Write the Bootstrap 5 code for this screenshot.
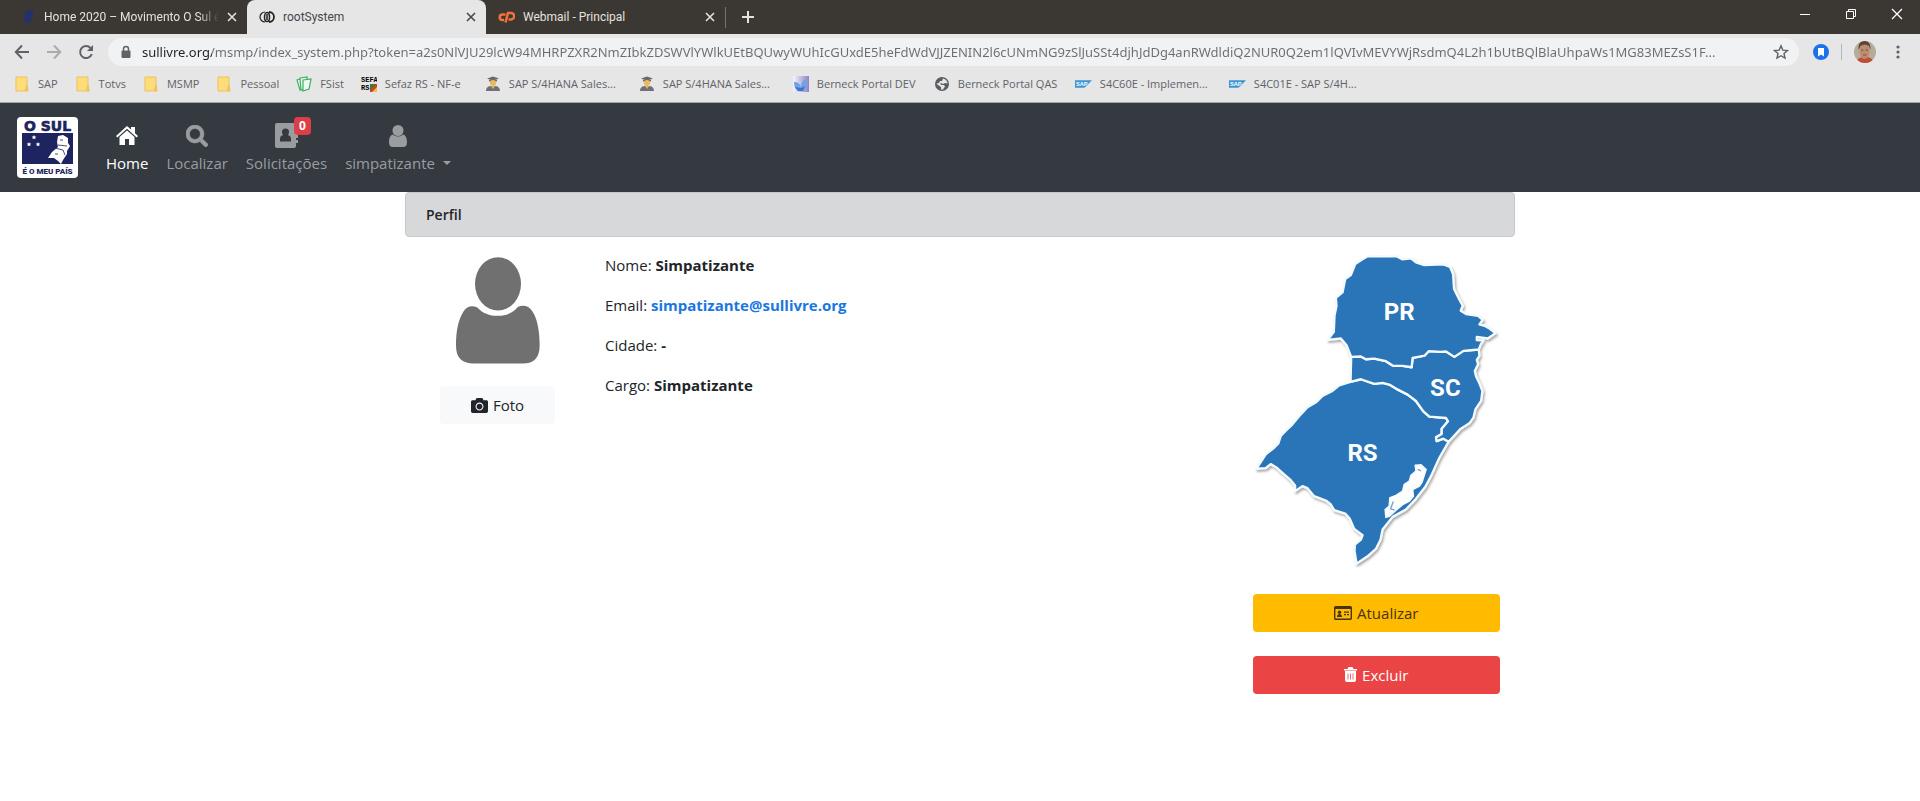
<!DOCTYPE html>
<html lang="pt-BR">
<head>
<meta charset="utf-8">
<meta name="viewport" content="width=device-width, initial-scale=1">
<title>rootSystem</title>
<link href="https://cdn.jsdelivr.net/npm/bootstrap@5.3.0/dist/css/bootstrap.min.css" rel="stylesheet">
<style>
  body { font-family: "Open Sans", "Noto Sans", sans-serif; font-size: 15px; line-height: 24px; color: #212529; background: #fff; }
  svg { display: block; flex: none; }
  .bare { border: 0; background: none; padding: 0; color: inherit; display: flex; }

  /* browser window */
  .tabstrip { background: #3b3833; height: 34px; padding-left: 8px; font-family: Roboto, sans-serif; font-size: 12px; line-height: 16px; color: #e4e2df; }
  .win-tab { width: 239px; padding: 0 10px 0 12px; gap: 8px; }
  .win-tab a { color: inherit; text-decoration: none; overflow: hidden; white-space: nowrap; flex: 1; }
  .win-tab.current { background: #e6e6e6; color: #45474a; border-radius: 8px 8px 0 0; }
  .fading { -webkit-mask-image: linear-gradient(to right, #000 88%, transparent); mask-image: linear-gradient(to right, #000 88%, transparent); }
  .tab-line { width: 1px; height: 21px; background: #77746f; }
  .win-controls { gap: 32px; padding: 0 17px 6px 0; color: #fff; }
  .toolbar { background: #e6e6e6; height: 36px; padding: 0 20px 0 14px; color: #5f6368; }
  .toolbar-end { gap: 12px; margin-left: 14px; }
  .toolbar-end .tab-line { height: 16px; background: #b4b6b9; }
  .address { background: #f1f2f4; border-radius: 14px; height: 28px; padding: 0 10px 0 12px; gap: 10px; margin-left: 14px; }
  .address input { border: 0; outline: 0; padding: 0; font-family: "Noto Sans", sans-serif; font-size: 13px; height: 24px; min-width: 0; color: #6a6d72;
    background: linear-gradient(to right, #202124 70px, #6a6d72 70px); -webkit-background-clip: text; background-clip: text; -webkit-text-fill-color: transparent; text-overflow: ellipsis; }
  .bookmarks { background: #e6e6e6; height: 33px; padding: 0 14px 4px; gap: 17px; border-bottom: 1px solid #a2a4a6; font-size: 11px; line-height: 16px; }
  .bookmarks a { color: #5f6368; text-decoration: none; display: flex; align-items: center; gap: 8px; white-space: nowrap; }
  .bookmarks .mid-mark { min-width: 107px; }
  .bookmarks .long-mark { min-width: 124px; }
  .bookmarks .full-mark { min-width: 137px; }

  /* site */
  .site-nav { background: #343a40; padding: 14px 17px; }
  .site-nav .nav-link { display: flex; flex-direction: column; align-items: center; padding: 0 8px; color: #9a9da0; }
  .site-nav .nav-link.active { color: #fff; }
  .site-nav .pic { height: 30px; display: flex; align-items: center; position: relative; }
  .site-nav .counter { position: absolute; left: 19px; top: -4px; background: #dc3f48; font-size: 12px; line-height: 12px; padding: 3px 5px; font-family: "Noto Sans", sans-serif; }
  .site-nav .navbar-nav { margin-left: 20px; gap: 2px; }
  .dropdown-toggle::after { margin-left: 8px; }
  .page-box { max-width: 1110px; }
  .page-box .row { --bs-gutter-x: 30px; margin: 16px 0 0; }
  .section-title { background: #d6d8d9; border: 1px solid #c6c8ca; border-radius: 4px; padding: 10px 20px 9px; font-weight: 600; line-height: 24px; font-size: 14px; }
  .page-box p { margin-bottom: 16px; }
  .page-box .btn { font-size: 15px; line-height: 24px; border-radius: 4px; display: flex; align-items: center; justify-content: center; gap: 5px; }
  .photo-box { gap: 22px; }
  .map-box { margin-bottom: -2px; }
  .btn-photo { width: 115px; background: #f8f9fa; color: #212529; }
  .btn-update { background: #ffbb00; color: #4a3310; }
  .btn-remove { background: #ea4444; color: #fff; }
  .mail { color: #1a76e0; text-decoration: none; }
</style>
</head>
<body>
<svg width="0" height="0" class="d-none">
  <symbol id="folder" viewBox="0 0 16 16"><path d="M2 1h11v10l1 4H2z" fill="#fddc7c" stroke="#ecc35a"/><path d="M11 14l2-5 1 6z" fill="#f5cb62" stroke="#e6b84a" stroke-width=".6"/></symbol>
  <symbol id="grad" viewBox="0 0 16 16"><path d="M2 2.500L8 .5l6 2L8 4.500z" fill="#66696d"/><path d="M4 3.500h8v2H4z" fill="#7d6a50"/><circle cx="8" cy="7" r="3" fill="#e8ba62"/><path d="M1 15c0-4 3-5 5-5l2 2 2-2c2 0 5 1 5 5z" fill="#6e7277"/><path d="M6 10h4l-2 3z" fill="#e0a955"/></symbol>
  <symbol id="sap" viewBox="0 0 18 10"><path d="M0 1h18l-8 8H0z" fill="#3b95d3"/><text x="1" y="7" font-family="Liberation Sans" font-weight="bold" font-size="6" fill="#fff">SAP</text></symbol>
  <symbol id="cross" viewBox="0 0 10 10"><path d="M1 1l8 8M9 1L1 9" stroke="currentColor" stroke-width="1.600"/></symbol>
  <symbol id="person" viewBox="195 234 252 320"><ellipse cx="321" cy="314" rx="69" ry="80"/><path d="M258 384C240 378 228 382 218 396 202 420 195 455 195 500 195 535 212 553 248 553H395C430 553 446 535 446 498 446 455 438 415 424 396 412 380 400 376 381 383 365 402 345 410 320 410 295 410 275 402 258 384Z"/></symbol>
</svg>

<header>
  <div class="tabstrip d-flex align-items-stretch">
    <div class="win-tab d-flex align-items-center">
      <svg width="16" height="16" viewBox="0 0 16 16"><path d="M6 2l4-1 3 2 0 4-1 3-3 4-3 1-1-3-3-1 3-3-1-2z" fill="#26306b"/></svg>
      <a href="#" class="fading">Home 2020 – Movimento O Sul é</a>
      <button class="bare" aria-label="Fechar"><svg width="10" height="10"><use href="#cross"/></svg></button>
    </div>
    <div class="win-tab current d-flex align-items-center">
      <svg width="16" height="16" viewBox="0 0 16 16" fill="none" stroke="#222"><path d="M6 3a4.800 4.800 0 100 10" stroke-width="1.200"/><path d="M10 3a4.800 4.800 0 110 10" stroke-width="1.800"/><ellipse cx="8" cy="8" rx="2.500" ry="4.600" stroke-width="1.500"/><path d="M8 5v6" stroke-width="1.500"/></svg>
      <a href="#">rootSystem</a>
      <button class="bare" aria-label="Fechar"><svg width="10" height="10"><use href="#cross"/></svg></button>
    </div>
    <div class="win-tab d-flex align-items-center">
      <svg width="17" height="16" viewBox="0 0 17 16" fill="none" stroke="#f2713c" stroke-width="2.500"><path d="M7.500 5.500H4.500a2.800 2.800 0 000 5.600H6M7.500 13.500L10 4h3a2.600 2.600 0 010 6.400h-2.500"/></svg>
      <a href="#">Webmail - Principal</a>
      <button class="bare" aria-label="Fechar"><svg width="10" height="10"><use href="#cross"/></svg></button>
    </div>
    <div class="d-flex align-items-center gap-3">
      <span class="tab-line"></span>
      <button class="bare" aria-label="Nova guia"><svg width="12" height="12" viewBox="0 0 12 12"><path d="M6 0v12M0 6h12" stroke="currentColor" stroke-width="2"/></svg></button>
    </div>
    <div class="win-controls d-flex align-items-center ms-auto">
      <button class="bare" aria-label="Minimizar"><svg width="14" height="12" viewBox="0 0 14 12"><path d="M1 6.500h10" stroke="currentColor"/></svg></button>
      <button class="bare" aria-label="Restaurar"><svg width="14" height="12" viewBox="0 0 14 12"><path d="M1.500 3.500h7v7h-7zM3.500 3V1.500h7v7H9" fill="none" stroke="currentColor"/></svg></button>
      <button class="bare" aria-label="Fechar janela"><svg width="12" height="12" viewBox="0 0 12 12"><path d="M1 1l10 10M11 1L1 11" stroke="currentColor" stroke-width="1.300"/></svg></button>
    </div>
  </div>

  <div class="toolbar d-flex align-items-center">
    <div class="d-flex gap-3">
      <button class="bare" aria-label="Voltar"><svg width="16" height="16" viewBox="0 0 16 16"><path d="M15 8H2M8 1.500L1.800 8 8 14.500" fill="none" stroke="currentColor" stroke-width="2"/></svg></button>
      <button class="bare" aria-label="Avançar"><svg width="16" height="16" viewBox="0 0 16 16"><path d="M1 8h13M8 1.500L14.200 8 8 14.500" fill="none" stroke="#a9abae" stroke-width="2"/></svg></button>
      <button class="bare" aria-label="Recarregar"><svg width="16" height="16" viewBox="0 0 16 16"><path d="M13.800 10A6 6 0 1112.500 4" fill="none" stroke="currentColor" stroke-width="2"/><path d="M15 1v6H9z" fill="currentColor"/></svg></button>
    </div>
    <div class="address d-flex align-items-center flex-grow-1">
      <svg width="12" height="14" viewBox="0 0 12 14"><path d="M3.500 6V4a2.500 2.500 0 015 0v2" fill="none" stroke="#5f6368" stroke-width="1.500"/><rect x="1.500" y="5.500" width="9" height="7.500" rx="1" fill="#5f6368"/></svg>
      <input type="text" class="flex-grow-1" aria-label="Endereço" value="sullivre.org/msmp/index_system.php?token=a2s0NlVJU29lcW94MHRPZXR2NmZIbkZDSWVlYWlkUEtBQUwyWUhIcGUxdE5heFdWdVJJZENIN2l6cUNmNG9zSlJuSSt4djhJdDg4anRWdldiQ2NUR0Q2em1lQVIvMEVYWjRsdmQ4L2h1bUtBQlBlaUhpaWs1MG83MEZsS1F...">
      <button class="bare" aria-label="Favoritar"><svg width="16" height="16" viewBox="0 0 16 16"><path d="M8 1.800l1.800 4.300 4.700.4-3.500 3 1 4.600L8 11.700 4 14.100l1-4.600-3.500-3 4.700-.4z" fill="none" stroke="#5f6368" stroke-width="1.400"/></svg></button>
    </div>
    <div class="toolbar-end d-flex align-items-center">
      <svg width="16" height="16" viewBox="0 0 16 16"><circle cx="8" cy="8" r="8" fill="#1a73e8"/><path d="M5 4h6v8.500l-3-2-3 2z" fill="#fff"/></svg>
      <span class="tab-line"></span>
      <svg class="me-2" width="22" height="22" viewBox="0 0 22 22"><defs><clipPath id="face"><circle cx="11" cy="11" r="11"/></clipPath></defs><g clip-path="url(#face)"><path fill="#b5ad9a" d="M0 0h22v22H0z"/><path fill="#bf4d33" d="M2 22c1-5 5-6 9-6s8 1 9 6z"/><ellipse cx="10.500" cy="10" rx="5" ry="8" fill="#c08a6e"/><path fill="#5b4636" d="M4.500 9C4 2 7 0 10 0s7 1 6.500 9l-1.500-4c-3-2-6-2-8.500 0z"/><path d="M7 9h2.500m2 0H14M9 14h3.500" stroke="#7a5444"/></g></svg>
      <button class="bare" aria-label="Menu"><svg width="4" height="16" viewBox="0 0 4 16"><g fill="#5f6368"><circle cx="2" cy="3" r="1.600"/><circle cx="2" cy="8" r="1.600"/><circle cx="2" cy="13" r="1.600"/></g></svg></button>
    </div>
  </div>

  <nav class="bookmarks d-flex align-items-center" aria-label="Favoritos">
    <a href="#"><svg width="16" height="16"><use href="#folder"/></svg>SAP</a>
    <a href="#"><svg width="16" height="16"><use href="#folder"/></svg>Totvs</a>
    <a href="#"><svg width="16" height="16"><use href="#folder"/></svg>MSMP</a>
    <a href="#"><svg width="16" height="16"><use href="#folder"/></svg>Pessoal</a>
    <a href="#"><svg width="16" height="16" viewBox="0 0 16 16" fill="#eefaf0" stroke="#3dae63" stroke-width="1.200"><path d="M1 4l6-2 2 10-5 2z"/><path d="M4 2l7-1 0 12-6 1z"/><path d="M7 4l8-1-2 10-6 2z"/></svg>FSist</a>
    <a href="#" class="mid-mark"><svg width="16" height="16" viewBox="0 0 16 16"><text x="0" y="6" font-family="Liberation Mono" font-weight="bold" font-size="7">SEFA</text><text x="0" y="14" font-family="Liberation Mono" font-weight="bold" font-size="7">RS</text><path d="M9 8h7l-7 8z" fill="#3c7d35"/><path d="M16 8v8H9z" fill="#eec33b"/><path d="M9 14l6-6h1v3l-5 5H9z" fill="#c9402f"/></svg>Sefaz RS - NF-e</a>
    <a href="#" class="full-mark"><svg width="16" height="16"><use href="#grad"/></svg>SAP S/4HANA Sales...</a>
    <a href="#" class="full-mark"><svg width="16" height="16"><use href="#grad"/></svg>SAP S/4HANA Sales...</a>
    <a href="#" class="long-mark"><svg width="16" height="16" viewBox="0 0 16 16"><defs><linearGradient id="sky" x1="0" y1="0" x2="1" y2="0"><stop offset="0" stop-color="#f3f6fd"/><stop offset="1" stop-color="#8c84c6"/></linearGradient></defs><path fill="url(#sky)" d="M0 0h16v16H0z"/><path fill="#6fa3e4" d="M1 6c4 0 6 2 7 5 0-4 2-7 4-8 3 5 2 9-2 12H5C2 13 1 10 1 6z"/><path fill="#3f74cf" d="M2 11l6 1 4-2-2 5H5z"/></svg>Berneck Portal DEV</a>
    <a href="#" class="long-mark"><svg width="16" height="16" viewBox="0 0 16 16"><circle cx="8" cy="8" r="7" fill="#5a5d61"/><path fill="#e6e6e6" d="M9 2.500c3 .5 4.500 3 4.500 5L11 7 9 8 7 7l-1 1 2 1h2l1 1.500-2 3-2 0V11L4 9 2.500 7.500 5 7l1-2h2z"/></svg>Berneck Portal QAS</a>
    <a href="#" class="full-mark"><svg width="17" height="10"><use href="#sap"/></svg>S4C60E - Implemen...</a>
    <a href="#" class="full-mark"><svg width="17" height="10"><use href="#sap"/></svg>S4C01E - SAP S/4H...</a>
  </nav>
</header>

<nav class="navbar navbar-expand site-nav" aria-label="Principal">
  <a href="#" aria-label="O Sul é o meu país">
    <svg width="61" height="61" viewBox="0 0 61 61">
      <rect width="61" height="61" rx="4" fill="#fff"/>
      <text x="30.500" y="14" text-anchor="middle" font-family="DejaVu Sans" font-weight="bold" font-size="14" fill="#1d2460" stroke="#1d2460" stroke-width=".6">O SUL</text>
      <path fill="#1d2460" d="M5 16h51v31H5z"/>
      <path fill="#fff" d="M41 19l5-1 5 3 0 5 2 3-3 5 0 3-4 6-2 4-3-3-4-3-6 0 4-6 6-5-1-5z"/>
      <path stroke="#1d2460" stroke-width=".8" fill="none" d="M41 28l9 1M38 31l8 2 2 5M43 23h3M38 37h3"/>
      <path fill="#fff" d="M17 18l.7 1.500 1.600.1-1.200 1.100.4 1.600-1.500-.9-1.500.9.400-1.600-1.200-1.100 1.600-.1zM12 25l.7 1.500 1.600.1-1.200 1.100.4 1.600-1.500-.9-1.500.9.400-1.600-1.200-1.100 1.600-.1zM21 25l.7 1.500 1.600.1-1.200 1.100.4 1.600-1.500-.9-1.500.9.400-1.600-1.200-1.100 1.600-.1z"/>
      <text x="30.500" y="57" text-anchor="middle" font-family="Roboto" font-weight="900" font-size="8" fill="#1d2460">É O MEU PAÍS</text>
    </svg>
  </a>
  <ul class="navbar-nav">
    <li class="nav-item"><a class="nav-link active" aria-current="page" href="#">
      <span class="pic"><svg width="22" height="19" viewBox="0 0 22 19" fill="currentColor"><path d="M0 10L11 0l4 3.600V1h4v6.200L22 10l-1.300 1.400L11 2.800 1.300 11.400z"/><path d="M3.500 11L11 4.500 18.500 11v8H13v-6H9v6H3.500z"/></svg></span>Home</a></li>
    <li class="nav-item"><a class="nav-link" href="#">
      <span class="pic"><svg width="22" height="22" viewBox="0 0 512 512" fill="currentColor" stroke="currentColor" stroke-width="16"><path d="M505 442.700L405.300 343c-4.500-4.500-10.600-7-17-7H372c27.600-35.300 44-79.700 44-128C416 93.100 322.900 0 208 0S0 93.100 0 208s93.100 208 208 208c48.300 0 92.700-16.400 128-44v16.300c0 6.400 2.500 12.500 7 17l99.700 99.700c9.400 9.400 24.600 9.400 33.900 0l28.300-28.300c9.400-9.400 9.400-24.600.1-34zM208 336c-70.700 0-128-57.200-128-128 0-70.700 57.200-128 128-128 70.700 0 128 57.200 128 128 0 70.700-57.200 128-128 128z"/></svg></span>Localizar</a></li>
    <li class="nav-item"><a class="nav-link" href="#">
      <span class="pic"><svg width="23" height="25" viewBox="0 0 23 25"><rect width="21" height="25" rx="2" fill="currentColor"/><path d="M21 5h2v4h-2zM21 11h2v4h-2zM21 17h2v3h-2z" fill="currentColor"/><circle cx="10.500" cy="9" r="3.500" fill="#343a40"/><path d="M5 18.500V16c0-3 2-4 3.500-4h4c1.500 0 3.500 1 3.500 4v2.500z" fill="#343a40"/></svg><span class="badge rounded-1 counter">0</span></span>Solicitações</a></li>
    <li class="nav-item dropdown"><a class="nav-link" href="#" role="button" data-bs-toggle="dropdown" aria-expanded="false">
      <span class="pic"><svg width="18" height="22" viewBox="0 0 18 22" fill="currentColor"><circle cx="9" cy="5.500" r="5.500"/><path d="M4 9.500C6 12 12 12 14 9.500c3 .5 4 4 4 8 0 3-1.500 4.500-4 4.500H4c-2.500 0-4-1.500-4-4.500 0-4 1-7.500 4-8z"/></svg></span><span class="dropdown-toggle">simpatizante</span></a></li>
  </ul>
</nav>

<main class="container page-box px-0">
  <h1 class="section-title mb-0">Perfil</h1>
  <div class="row">
    <div class="col-2 photo-box d-flex flex-column align-items-center">
      <svg class="mt-1" width="84" height="107" fill="#707070" role="img" aria-label="Foto do perfil"><use href="#person"/></svg>
      <button class="btn btn-photo" type="button"><svg width="17" height="17" viewBox="0 0 512 512" fill="currentColor"><path d="M512 144v288c0 26.500-21.500 48-48 48H48c-26.500 0-48-21.500-48-48V144c0-26.500 21.500-48 48-48h88l12.300-32.900c7-18.700 24.900-31.100 44.900-31.100h125.500c20 0 37.900 12.400 44.900 31.100L376 96h88c26.500 0 48 21.500 48 48zM376 288c0-66.200-53.800-120-120-120s-120 53.800-120 120 53.800 120 120 120 120-53.800 120-120zm-32 0c0 48.500-39.500 88-88 88s-88-39.500-88-88 39.500-88 88-88 88 39.500 88 88z"/></svg>Foto</button>
    </div>
    <div class="col-7">
      <p>Nome: <strong>Simpatizante</strong></p>
      <p>Email: <strong><a class="mail" href="mailto:simpatizante@sullivre.org">simpatizante@sullivre.org</a></strong></p>
      <p>Cidade: <strong>-</strong></p>
      <p>Cargo: <strong>Simpatizante</strong></p>
    </div>
    <div class="col-3 d-flex flex-column gap-4">
      <svg class="w-100 map-box" viewBox="42 42 741 954" role="img" aria-label="Mapa: PR, SC, RS">
        <defs><filter id="shade" x="-5%" y="-5%" width="110%" height="110%"><feDropShadow dx="4" dy="6" stdDeviation="3" flood-color="#555" flood-opacity=".5"/></filter></defs>
        <g fill="#2c74b8" stroke="#f4fbff" stroke-width="7" stroke-linejoin="round" filter="url(#shade)">
          <path d="M334 428L300 438 278 456 250 470 232 488 205 504 185 525 160 555 138 576 125 590 118 612 105 625 80 645 52 688 80 686 95 674 112 684 130 700 155 722 168 738 168 755 190 740 205 746 225 770 262 784 275 795 285 812 318 822 332 838 345 868 370 887 365 900 347 915 346 935 352 972 385 950 410 928 424 900 430 870 460 832 500 810 530 778 558 742 575 710 600 655 628 607 612 598 592 605 590 594 607 584 607 568 626 546 620 536 570 532 552 516 530 485 505 466 470 448 450 436 430 431 405 434 365 420Z"/>
          <path d="M336 353L365 352 380 360 405 358 440 366 460 379 490 380 517 384 520 356 556 349 568 336 605 338 620 337 645 353 672 335 718 331 720 350 712 362 716 375 706 395 710 412 718 428 729 455 725 485 708 510 702 535 690 552 662 570 628 607 612 598 592 605 590 594 607 584 607 568 626 546 620 536 570 532 552 516 530 485 505 466 470 448 450 436 430 431 405 434 365 420 334 428Z"/>
          <path d="M385 52L470 51 490 61 515 58 530 70 555 78 612 76 632 84 641 105 644 150 658 178 670 200 664 215 680 225 716 230 730 242 720 256 735 260 750 268 768 282 745 298 712 293 712 303 732 304 724 316 718 331 672 335 645 353 620 337 605 338 568 336 556 349 520 356 517 384 490 380 460 379 440 366 405 358 380 360 365 352 336 353 322 318 305 298 266 302 284 278 286 230 292 200 290 176 310 160 318 120 335 108 348 75 365 64Z"/>
        </g>
        <path d="M528 678L545 676 560 690 553 712 548 728 540 740 520 750 522 770 510 785 490 795 470 812 450 830 440 833 438 810 450 800 452 775 470 768 490 755 495 735 510 725 515 708 530 695Z" fill="#fff" stroke="#f4fbff" stroke-width="5"/>
        <path d="M535 690l10 4M462 786l-8 22 12 4" fill="none" stroke="#6fa3d0" stroke-width="4"/>
        <g fill="#fff" font-family="Roboto" font-weight="700" font-size="72" text-anchor="middle">
          <text x="480" y="242">PR</text><text x="618" y="471">SC</text><text x="370" y="664">RS</text>
        </g>
      </svg>
      <button class="btn btn-update" type="button"><svg width="18" height="14" viewBox="0 0 18 14"><rect x=".7" y=".7" width="16.600" height="12.600" rx="1" fill="none" stroke="currentColor" stroke-width="1.400"/><path d="M1 1h16v2H1zM3 11c0-2 1-3 2.500-3S8 9 8 11zM10 5.500h5v1.200h-5zM10 8h2v1.200h-2zM13 8h2v1.200h-2z" fill="currentColor"/><circle cx="5.500" cy="6.300" r="1.700" fill="currentColor"/></svg>Atualizar</button>
      <button class="btn btn-remove" type="button"><svg width="13" height="15" viewBox="0 0 13 15"><path d="M0 2h3.500L4.500 0h4l1 2H13v1.500H0z" fill="currentColor"/><path d="M1 4h11V13a2 2 0 01-2 2H3a2 2 0 01-2-2z" fill="currentColor"/><path d="M4 6.500v6M6.500 6.500v6M9 6.500v6" stroke="#ea4444" stroke-width=".8"/></svg>Excluir</button>
    </div>
  </div>
</main>
<script src="https://cdn.jsdelivr.net/npm/bootstrap@5.3.0/dist/js/bootstrap.bundle.min.js"></script>
</body>
</html>
